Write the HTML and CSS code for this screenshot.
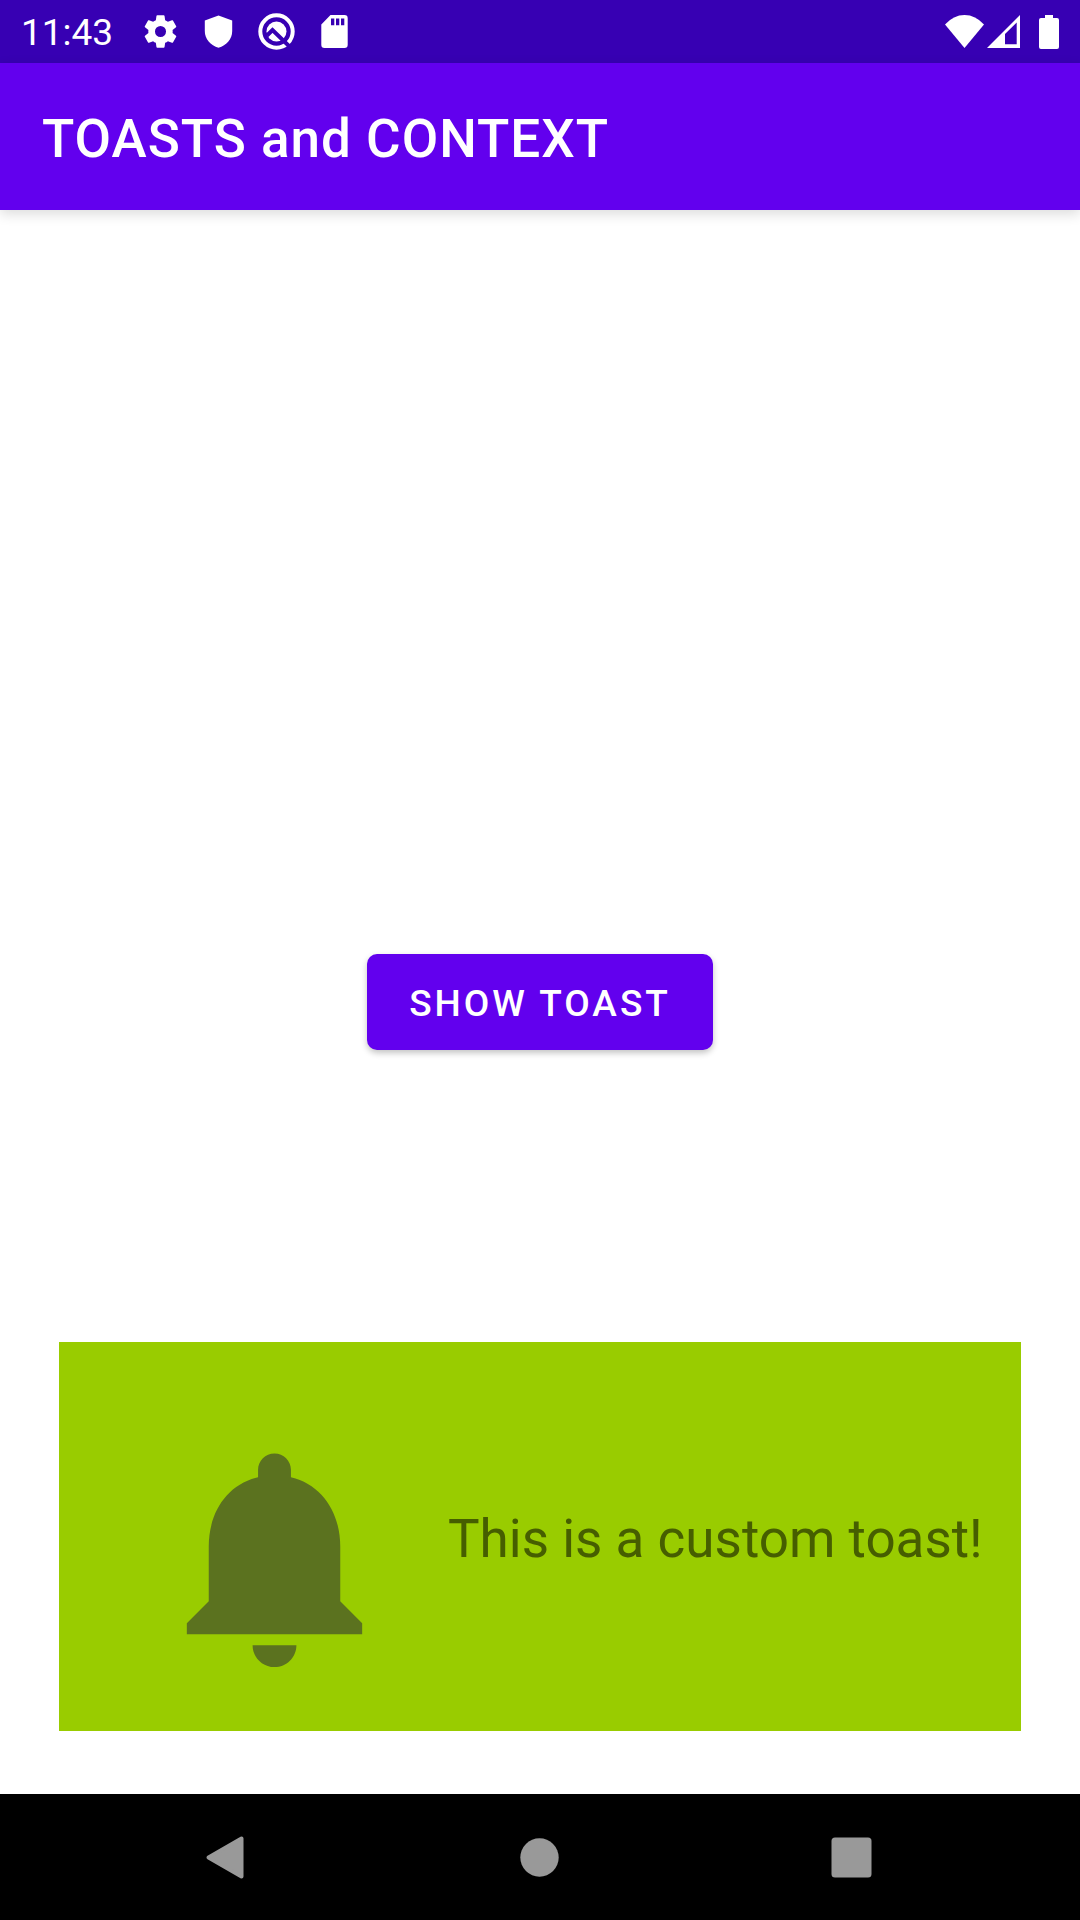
FILE: index.html
```html
<!DOCTYPE html>
<html lang="en">
<head>
<meta charset="utf-8">
<meta name="viewport" content="width=device-width, initial-scale=1">
<title>TOASTS and CONTEXT</title>
<link rel="stylesheet" href="styles.css">
</head>
<body>
<div class="screen">
  <div class="status-bar">
    <div class="status-left">
      <span class="clock">11:43</span>
      <svg class="status-icon" viewBox="0 0 24 24" aria-hidden="true"><path fill-rule="evenodd" d="M19.43 12.98c.04-.32.07-.64.07-.98s-.03-.66-.07-.98l2.11-1.65c.19-.15.24-.42.12-.64l-2-3.46c-.12-.22-.39-.3-.61-.22l-2.49 1c-.52-.4-1.08-.73-1.69-.98l-.38-2.65C14.46 2.18 14.25 2 14 2h-4c-.25 0-.46.18-.49.42l-.38 2.65c-.61.25-1.17.59-1.69.98l-2.49-1c-.23-.09-.49 0-.61.22l-2 3.46c-.13.22-.07.49.12.64l2.11 1.65c-.04.32-.07.65-.07.98s.03.66.07.98l-2.11 1.65c-.19.15-.24.42-.12.64l2 3.46c.12.22.39.3.61.22l2.49-1c.52.4 1.08.73 1.69.98l.38 2.65c.03.24.24.42.49.42h4c.25 0 .46-.18.49-.42l.38-2.65c.61-.25 1.17-.59 1.69-.98l2.49 1c.23.09.49 0 .61-.22l2-3.46c.12-.22.07-.49-.12-.64l-2.11-1.65zM12 15.4a3.4 3.4 0 1 1 0-6.8 3.4 3.4 0 0 1 0 6.8z"/></svg>
      <svg class="status-icon" viewBox="0 0 39 39" aria-hidden="true"><path d="M19.500 3.500 33.200 8.500V19C33.200 27 27.500 33.500 19.500 35.800 11.500 33.500 5.800 27 5.800 19V8.500z"/></svg>
      <svg class="status-icon" viewBox="0 0 39 39" aria-hidden="true">
        <circle class="ring" cx="19.500" cy="19.500" r="16.200"/>
        <circle cx="19.500" cy="19.500" r="10"/>
        <path class="cut" d="M10 23.500 15.500 18 33 35"/>
      </svg>
      <svg class="status-icon" viewBox="0 0 39 39" aria-hidden="true"><path fill-rule="evenodd" d="M15.500 3H29.500A3.200 3.200 0 0 1 32.700 6.200V32.800A3.200 3.200 0 0 1 29.500 36H9.500A3.200 3.200 0 0 1 6.300 32.800V12.500zM16 6.500V13.300H19.300V6.500zM21 6.500V13.300H24.300V6.500zM26 6.500V13.300H29.300V6.500z"/></svg>
    </div>
    <div class="status-right">
      <svg class="wifi" viewBox="0 0 39 34" aria-hidden="true"><path d="M0 9.500Q8.500 0 19.500 0T39 9.500L19.500 33z"/></svg>
      <svg class="signal" viewBox="0 0 33 34" aria-hidden="true"><path fill-rule="evenodd" d="M0 33 33 0V33zM18 19V29.300H29.700V7.600z"/></svg>
      <svg class="battery" viewBox="0 0 20 34" aria-hidden="true"><path d="M6 0H14V3H18A2 2 0 0 1 20 5V32A2 2 0 0 1 18 34H2A2 2 0 0 1 0 32V5A2 2 0 0 1 2 3H6z"/></svg>
    </div>
  </div>
  <header class="app-bar"><h1 class="title">TOASTS and CONTEXT</h1></header>
  <main class="content">
    <button class="show-toast" type="button">SHOW TOAST</button>
    <div class="toast" role="status">
      <svg class="bell" viewBox="0 0 24 24" aria-hidden="true"><path d="M12 22c1.100 0 2-.9 2-2h-4c0 1.100.89 2 2 2zm6-6v-5c0-3.070-1.640-5.640-4.500-6.320V4c0-.83-.67-1.500-1.500-1.500s-1.500.67-1.500 1.500v.68C7.630 5.360 6 7.920 6 11v5l-2 2v1h16v-1l-2-2z"/></svg>
      <span class="toast-text">This is a custom toast!</span>
    </div>
  </main>
  <nav class="nav-bar" aria-label="System navigation">
    <button class="nav-button" type="button" aria-label="Back"><svg class="nav-icon" viewBox="0 0 63 63" aria-hidden="true"><path class="rounded" d="M44.500 12.500V50.500L11.500 31.500z"/></svg></button>
    <button class="nav-button" type="button" aria-label="Home"><svg class="nav-icon" viewBox="0 0 63 63" aria-hidden="true"><circle cx="31.500" cy="31.500" r="19.200"/></svg></button>
    <button class="nav-button" type="button" aria-label="Recent apps"><svg class="nav-icon" viewBox="0 0 63 63" aria-hidden="true"><rect x="11.500" y="11.500" width="40" height="40" rx="3.500"/></svg></button>
  </nav>
</div>
</body>
</html>
```
FILE: styles.css
```css
* { box-sizing: border-box; }

body {
  margin: 0;
  background: #fff;
  font-family: Roboto, "Liberation Sans", sans-serif;
}

svg { display: block; flex: none; fill: #fff; }

button {
  border: 0;
  font-family: inherit;
  cursor: pointer;
}

.screen {
  display: flex;
  flex-direction: column;
  min-height: 100vh;
}

.status-bar {
  display: flex;
  align-items: center;
  justify-content: space-between;
  height: 63px;
  padding: 0 21px;
  background: #3700b3;
  color: #fff;
}

.status-left { display: flex; align-items: center; gap: 19px; }
.clock { padding-top: 2px; margin-right: 9px; font-size: 37px; line-height: 42px; }
.status-icon { width: 39px; height: 39px; }
.ring { fill: none; stroke: #fff; stroke-width: 4px; }
.cut { fill: none; stroke: #3700b3; stroke-width: 4px; }

.status-right { display: flex; align-items: center; }
.wifi { width: 39px; height: 34px; }
.signal { width: 33px; height: 34px; margin: 0 19px 0 3px; }
.battery { width: 20px; height: 34px; }

.app-bar {
  position: relative;
  display: flex;
  align-items: center;
  height: 147px;
  padding: 4px 42px 0;
  background: #6200ee;
  box-shadow: 0 4px 12px rgba(0, 0, 0, 0.14);
}

.title {
  margin: 0;
  color: #fff;
  font-size: 53px;
  font-weight: 500;
  letter-spacing: 1px;
  line-height: 62px;
}

.content {
  position: relative;
  display: flex;
  flex: 1;
  align-items: center;
  justify-content: center;
}

.show-toast {
  height: 96px;
  padding: 2px 42px 0;
  border-radius: 10px;
  background: #6200ee;
  box-shadow: 0 3px 6px rgba(0, 0, 0, 0.24);
  color: #fff;
  font-size: 37px;
  font-weight: 500;
  letter-spacing: 3px;
}

.toast {
  position: absolute;
  right: 59px;
  bottom: 63px;
  left: 59px;
  display: flex;
  align-items: center;
  gap: 42px;
  padding: 42px;
  background: #99cc00;
}

.bell { width: 263px; height: 263px; margin: 42px 0 0 42px; fill: #5b721f; }

.toast-text {
  padding-top: 4px;
  color: #465e00;
  font-size: 53px;
  line-height: 62px;
  white-space: nowrap;
}

.nav-bar {
  display: grid;
  grid-template-columns: repeat(3, 1fr);
  height: 126px;
  padding: 0 73px;
  background: #000;
}

.nav-button {
  display: flex;
  align-items: center;
  justify-content: center;
  padding: 0;
  background: none;
}

.nav-icon { width: 63px; height: 63px; fill: #999; }
.rounded { stroke: #999; stroke-width: 4px; stroke-linejoin: round; }
```
